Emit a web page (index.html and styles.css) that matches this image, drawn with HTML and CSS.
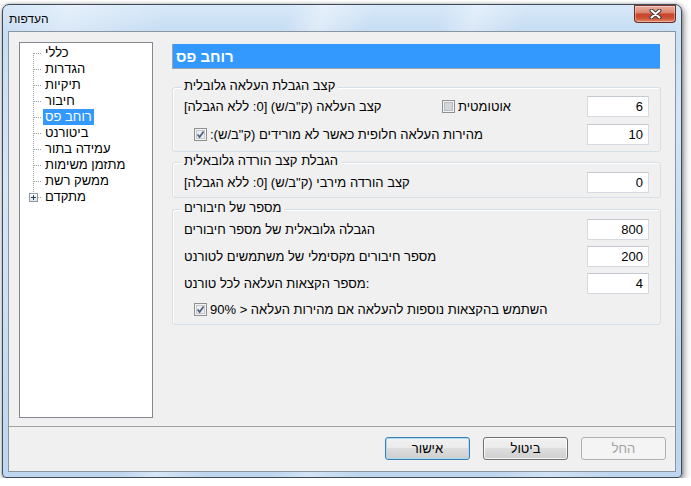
FILE: index.html
```html
<!DOCTYPE html>
<html lang="he">
<head>
<meta charset="utf-8">
<title>העדפות</title>
<link rel="stylesheet" href="styles.css">
</head>
<body>
<div class="window">
  <div class="titlebar">
    <span class="title">העדפות</span>
    <div class="close">
      <svg width="13" height="10" viewBox="0 0 13 10">
        <path d="M2.5 1.5 L10.5 8.5 M10.5 1.5 L2.5 8.5" stroke="#3b3b3b" stroke-width="4" stroke-linecap="round" fill="none"/>
        <path d="M2.5 1.5 L10.5 8.5 M10.5 1.5 L2.5 8.5" stroke="#ffffff" stroke-width="2" stroke-linecap="round" fill="none"/>
      </svg>
    </div>
  </div>
  <div class="client">
    <div class="main">
      <div class="tree">
        <ul class="tree-list">
          <li class="item first"><span class="item-label">כללי</span></li>
          <li class="item"><span class="item-label">הגדרות</span></li>
          <li class="item"><span class="item-label">תיקיות</span></li>
          <li class="item"><span class="item-label">חיבור</span></li>
          <li class="item"><span class="item-label selected">רוחב פס</span></li>
          <li class="item"><span class="item-label">ביטורנט</span></li>
          <li class="item"><span class="item-label">עמידה בתור</span></li>
          <li class="item"><span class="item-label">מתזמן משימות</span></li>
          <li class="item"><span class="item-label">ממשק רשת</span></li>
          <li class="item last expand"><span class="plus"><svg width="7" height="7" viewBox="0 0 7 7"><path d="M1 3.5 H6 M3.5 1 V6" stroke="#2c3e60" stroke-width="1" fill="none"/></svg></span><span class="item-label">מתקדם</span></li>
        </ul>
      </div>
      <div class="panel">
        <div class="header">רוחב פס</div>

        <div class="group g1">
          <div class="gtitle"><span dir="rtl">קצב הגבלת העלאה גלובלית</span></div>
          <div class="rows">
            <div class="row">
              <span class="label wide" dir="rtl">קצב העלאה (ק"ב/ש) [0: ללא הגבלה]</span>
              <span class="check">
                <svg class="cb" width="13" height="13" viewBox="0 0 13 13"><rect x="0.5" y="0.5" width="12" height="12" fill="#f4f4f4" stroke="#8f8f8f"/><rect x="2.5" y="2.5" width="8" height="8" fill="#d2d5da" stroke="#b7bcc2"/></svg>
                <span dir="rtl">אוטומטית</span>
              </span>
              <span class="input">6</span>
            </div>
            <div class="row">
              <span class="check indent">
                <svg class="cb" width="13" height="13" viewBox="0 0 13 13"><rect x="0.5" y="0.5" width="12" height="12" fill="#f4f4f4" stroke="#8f8f8f"/><rect x="2.5" y="2.5" width="8" height="8" fill="#eceef1" stroke="#c4c8cd"/><path d="M3.6 6.4 L5.6 9 L9.6 3.4" fill="none" stroke="#4f5f82" stroke-width="1.7"/></svg>
                <span dir="rtl">מהירות העלאה חלופית כאשר לא מורידים (ק"ב/ש):</span>
              </span>
              <span class="input">10</span>
            </div>
          </div>
        </div>

        <div class="group g2">
          <div class="gtitle"><span dir="rtl">הגבלת קצב הורדה גלובאלית</span></div>
          <div class="rows">
            <div class="row">
              <span class="label" dir="rtl">קצב הורדה מירבי (ק"ב/ש) [0: ללא הגבלה]</span>
              <span class="input">0</span>
            </div>
          </div>
        </div>

        <div class="group g3">
          <div class="gtitle"><span dir="rtl">מספר של חיבורים</span></div>
          <div class="rows">
            <div class="row">
              <span class="label" dir="rtl">הגבלה גלובאלית של מספר חיבורים</span>
              <span class="input">800</span>
            </div>
            <div class="row">
              <span class="label" dir="rtl">מספר חיבורים מקסימלי של משתמשים לטורנט</span>
              <span class="input">200</span>
            </div>
            <div class="row">
              <span class="label" dir="rtl">:מספר הקצאות העלאה לכל טורנט</span>
              <span class="input">4</span>
            </div>
            <div class="row short">
              <span class="check indent">
                <svg class="cb" width="13" height="13" viewBox="0 0 13 13"><rect x="0.5" y="0.5" width="12" height="12" fill="#f4f4f4" stroke="#8f8f8f"/><rect x="2.5" y="2.5" width="8" height="8" fill="#eceef1" stroke="#c4c8cd"/><path d="M3.6 6.4 L5.6 9 L9.6 3.4" fill="none" stroke="#4f5f82" stroke-width="1.7"/></svg>
                <span dir="rtl">השתמש בהקצאות נוספות להעלאה אם מהירות העלאה &lt; 90%</span>
              </span>
            </div>
          </div>
        </div>
      </div>
    </div>
    <div class="separator"></div>
    <div class="footer">
      <div class="btn default">אישור</div>
      <div class="btn">ביטול</div>
      <div class="btn disabled">החל</div>
    </div>
  </div>
</div>
</body>
</html>
```

FILE: styles.css
```css
* { box-sizing: border-box; }
html, body { margin: 0; }
body {
  background: #ffffff;
  padding: 4px 0 0 2px;
  font-family: "Liberation Sans", "DejaVu Sans", sans-serif;
  font-size: 13px;
  color: #000;
}

.window {
  width: 680px;
  border: 1px solid #3f4b58;
  border-radius: 7px 7px 4px 4px;
  background:
    linear-gradient(110deg, rgba(255,255,255,0) 0%, rgba(255,255,255,0.35) 8%, rgba(255,255,255,0) 20%, rgba(255,255,255,0) 34%, rgba(255,255,255,0.4) 38%, rgba(255,255,255,0) 44%, rgba(255,255,255,0) 52%, rgba(255,255,255,0.35) 56%, rgba(255,255,255,0) 62%, rgba(255,255,255,0) 78%, rgba(255,255,255,0.3) 84%, rgba(255,255,255,0) 92%),
    linear-gradient(to bottom, #d7e8f8 0px, #c4dbf2 30px, #bed6ef 100%);
  box-shadow: 2px 3px 7px rgba(0,0,0,0.45), 0 0 3px rgba(0,0,0,0.3);
}

.titlebar {
  height: 26px;
  display: flex;
  align-items: flex-start;
}
.title {
  padding: 7px 0 0 6px;
  font-size: 12px;
  line-height: 14px;
}
.close {
  margin-left: auto;
  margin-right: 5px;
  width: 42px;
  height: 18px;
  border: 1px solid #6a2b24;
  border-top-color: #7b3a33;
  border-radius: 0 0 4px 4px;
  background: linear-gradient(to bottom, #eab0a2 0%, #dc8774 40%, #c8452c 52%, #cc4f34 75%, #e38a6c 100%);
  box-shadow: inset 0 0 0 1px rgba(255,255,255,0.35);
  display: flex;
  align-items: center;
  justify-content: center;
}

.client {
  margin: 0 5px 5px;
  border: 1px solid #8a95a2;
  background: #f0f0f0;
}

.main {
  display: flex;
  padding: 10px 14px 0 10px;
}

.tree {
  flex: none;
  width: 134px;
  height: 376px;
  border: 1px solid #828790;
  background: #fff;
}
.tree-list {
  list-style: none;
  margin: 0;
  padding: 2px 0 0 0;
}
.item {
  height: 16px;
  display: flex;
  align-items: center;
  background: repeating-linear-gradient(to bottom, #a0a0a0 0 1px, transparent 1px 2px) no-repeat;
  background-size: 1px 100%;
  background-position: 13px 0;
}
.item.first {
  background-size: 1px 8px;
  background-position: 13px 8px;
}
.item.last {
  background-size: 1px 8px;
  background-position: 13px 0;
}
.item::before {
  content: "";
  flex: none;
  width: 7px;
  height: 1px;
  margin: 0 2px 0 14px;
  background: repeating-linear-gradient(to right, #a0a0a0 0 1px, transparent 1px 2px);
}
.expand::before {
  order: 1;
  width: 3px;
  margin: 0 2px 0 0;
}
.plus {
  order: 0;
  flex: none;
  margin-left: 9px;
  width: 9px;
  height: 9px;
  border: 1px solid #8f9aa7;
  background: linear-gradient(to bottom, #ffffff, #dfe3e8);
  display: flex;
  align-items: center;
  justify-content: center;
}
.plus svg { display: block; }
.expand .item-label { order: 2; }
.item-label {
  padding: 0 2px;
  line-height: 16px;
  height: 16px;
  white-space: nowrap;
}
.item-label.selected {
  background: #3399ff;
  color: #fff;
}

.panel {
  flex: 1;
  margin-left: 19px;
}
.header {
  margin: 2px 1px 0 0;
  height: 25px;
  background: #3399ff;
  border-left: 1px solid #9aa6b3;
  border-bottom: 1px solid #9aa6b3;
  color: #fff;
  font-weight: bold;
  font-size: 15px;
  padding-left: 3px;
  display: flex;
  align-items: center;
}

.group {
  border: 1px solid #d5dfe5;
  border-radius: 3px;
  box-shadow: inset 1px 1px 0 #fff;
}
.g1 { margin-top: 18px; }
.g2 { margin-top: 10px; }
.g3 { margin-top: 11px; }
.gtitle {
  margin: -10px 0 0 8px;
  height: 16px;
  line-height: 16px;
}
.gtitle span {
  display: inline-block;
  padding: 0 3px;
  background: #f0f0f0;
}
.rows {
  display: flex;
  flex-direction: column;
  padding: 0 11px;
}
.g1 .rows { padding-top: 2px; padding-bottom: 6px; gap: 7px; }
.g2 .rows { padding-top: 3px; padding-bottom: 4px; }
.g3 .rows { padding-top: 3px; padding-bottom: 7px; gap: 6px; }
.g3 .row.short { height: 16px; margin-top: 1px; }

.row {
  display: flex;
  align-items: center;
  height: 21px;
}
.label { white-space: nowrap; text-align: left; }
.label.wide { flex: none; width: 258px; }
.check {
  display: flex;
  align-items: center;
  gap: 3px;
  white-space: nowrap;
}
.check.indent { padding-left: 10px; }
.cb { display: block; flex: none; }
.input {
  margin-left: auto;
  flex: none;
  width: 62px;
  height: 21px;
  border: 1px solid #d6dae0;
  border-top-color: #c4c9cf;
  background: #fff;
  text-align: right;
  padding-right: 5px;
  line-height: 19px;
  font-size: 13px;
}

.separator {
  height: 1px;
  margin-top: 8px;
  background: #a0a0a0;
}
.footer {
  display: flex;
  justify-content: flex-end;
  gap: 13px;
  padding: 10px 9px 11px;
}
.btn {
  width: 85px;
  height: 23px;
  border: 1px solid #707070;
  border-radius: 3px;
  background: linear-gradient(to bottom, #f2f2f2 0%, #ebebeb 45%, #dddddd 50%, #cfcfcf 100%);
  box-shadow: inset 0 0 0 1px rgba(255,255,255,0.8);
  display: flex;
  align-items: center;
  justify-content: center;
  font-size: 13px;
}
.btn.default {
  border-color: #3c7fb1;
  box-shadow: inset 0 0 0 1px #a9dcf2;
}
.btn.disabled {
  border-color: #adb2b5;
  background: #f4f4f4;
  box-shadow: none;
  color: #a3a3a3;
}
```
